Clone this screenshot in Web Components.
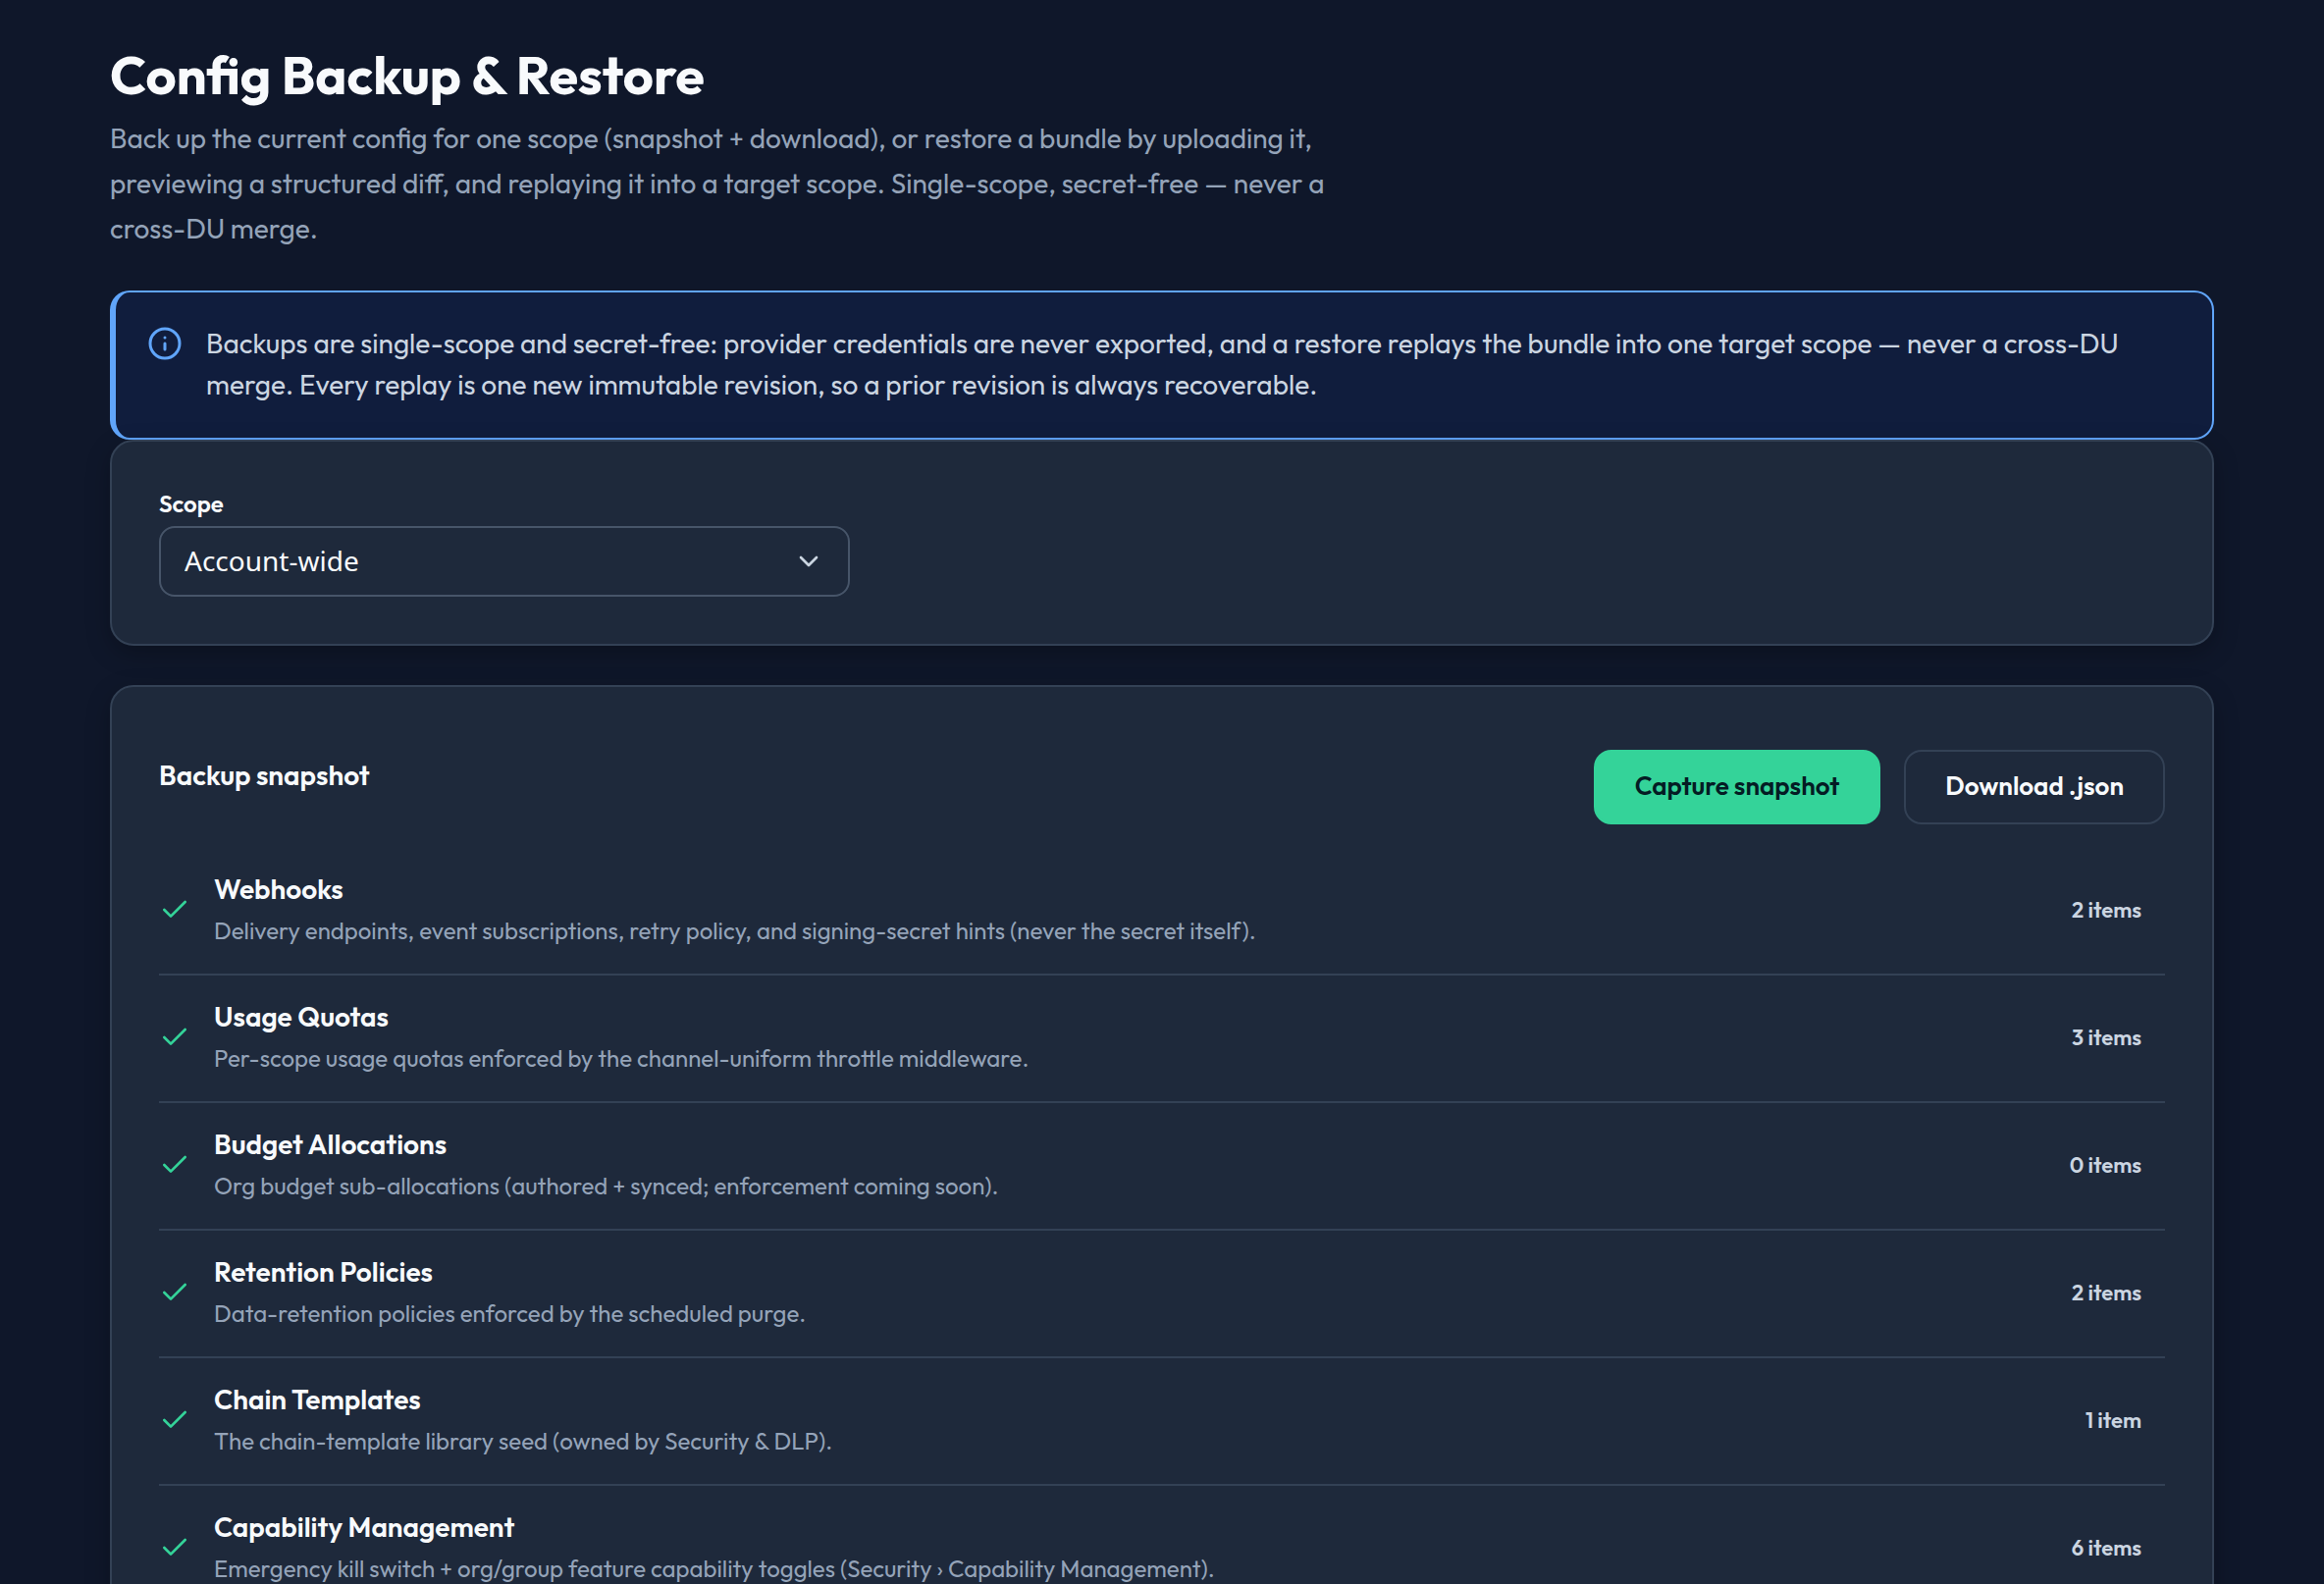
<!DOCTYPE html>
<html lang="en">
<head>
<meta charset="utf-8">
<meta name="viewport" content="width=device-width, initial-scale=1">
<title>Config Backup &amp; Restore</title>
<style>
  :root {
    --page: #0f172a;
    --surface: #1e293b;
    --line: #334155;
    --line-strong: #475569;
    --text: #f8fafc;
    --text-soft: #cbd5e1;
    --text-muted: #94a3b8;
    --info: #60a5fa;
    --info-surface: #101d3d;
    --accent: #34d399;
    --on-accent: #041c24;
  }
  body {
    margin: 0;
    background: var(--page);
    color: var(--text);
    font: 400 28px/42px Outfit, Lato, sans-serif;
    height: 100vh;
    overflow: hidden;
  }
</style>
</head>
<body>
<backup-page></backup-page>

<script>
  const define = (name, markup) => {
    const template = document.createElement('template');
    template.innerHTML = markup;
    customElements.define(name, class extends HTMLElement {
      constructor() {
        super();
        this.attachShadow({ mode: 'open' }).append(template.content.cloneNode(true));
      }
    });
  };

  define('page-heading', `
    <style>
      :host { display: flex; flex-direction: column; gap: 12px; margin-bottom: 40px; }
      h1 { margin: 0; font-size: 54px; line-height: 60px; font-weight: 700; }
      p { margin: 0; max-width: 1280px; line-height: 46px; color: var(--text-muted); }
    </style>
    <h1><slot name="title"></slot></h1>
    <p><slot></slot></p>`);

  define('info-banner', `
    <style>
      :host {
        display: flex; gap: 24px; padding: 31px 32px 33px;
        border: 2px solid var(--info); border-left-width: 6px; border-radius: 20px;
        background: var(--info-surface); color: var(--text-soft);
      }
      svg { flex: none; width: 36px; height: 36px; margin-top: 3px; color: var(--info); }
    </style>
    <svg viewBox="0 0 24 24" fill="none" stroke="currentColor" stroke-width="2" stroke-linecap="round" stroke-linejoin="round" aria-hidden="true">
      <circle cx="12" cy="12" r="10"/><path d="M12 16v-4"/><path d="M12 8h.01"/>
    </svg>
    <div role="note"><slot></slot></div>`);

  define('surface-card', `
    <style>
      :host {
        display: block; padding: 48px;
        border: 2px solid var(--line); border-radius: 24px;
        background: var(--surface);
        box-shadow: 0 8px 24px rgba(0, 0, 0, .25);
      }
    </style>
    <slot></slot>`);

  define('scope-field', `
    <style>
      :host { display: flex; flex-direction: column; gap: 8px; max-width: 704px; }
      label { font-size: 24px; line-height: 30px; font-weight: 600; }
      .control { display: grid; align-items: center; }
      .control > * { grid-area: 1 / 1; }
      select {
        appearance: none; box-sizing: border-box; width: 100%; height: 72px; margin: 0;
        padding: 0 72px 2px 24px;
        border: 2px solid var(--line-strong); border-radius: 16px;
        background: var(--surface); color: var(--text);
        font: 400 28px/42px "Noto Sans", sans-serif;
      }
      svg { justify-self: end; width: 32px; height: 32px; margin-right: 26px; color: var(--text-soft); pointer-events: none; }
    </style>
    <label for="scope">Scope</label>
    <div class="control">
      <select id="scope"><option>Account-wide</option></select>
      <svg viewBox="0 0 24 24" fill="none" stroke="currentColor" stroke-width="2" stroke-linecap="round" stroke-linejoin="round" aria-hidden="true"><path d="m6 9 6 6 6-6"/></svg>
    </div>`);

  define('action-button', `
    <style>
      :host { display: block; }
      button {
        display: block; height: 76px; margin: 0; padding: 0 40px 2px;
        border: 2px solid var(--line); border-radius: 18px;
        background: transparent; color: var(--text);
        font: 600 26px/40px Outfit, Lato, sans-serif; cursor: pointer;
      }
      :host([primary]) button { background: var(--accent); border-color: var(--accent); color: var(--on-accent); }
    </style>
    <button type="button"><slot></slot></button>`);

  define('snapshot-header', `
    <style>
      :host { display: flex; justify-content: space-between; align-items: flex-start; gap: 24px; padding: 16px 0 24px; }
      h2 { margin: 0; font-size: 28px; line-height: 52px; font-weight: 600; }
      .actions { display: flex; gap: 24px; }
    </style>
    <h2><slot></slot></h2>
    <div class="actions"><slot name="actions"></slot></div>`);

  define('domain-row', `
    <style>
      :host {
        display: flex; align-items: center; gap: 24px;
        padding: 24px 24px 26px 0; border-bottom: 2px solid var(--line);
      }
      svg { flex: none; width: 32px; height: 32px; color: var(--accent); }
      .body { flex: 1; display: flex; flex-direction: column; gap: 6px; min-width: 0; line-height: 36px; }
      .name { font-weight: 600; }
      .about { font-size: 24px; color: var(--text-muted); }
      .count { font-size: 22px; line-height: 32px; font-weight: 600; color: var(--text-soft); white-space: nowrap; }
    </style>
    <svg viewBox="0 0 24 24" fill="none" stroke="currentColor" stroke-width="2" stroke-linecap="round" stroke-linejoin="round" aria-hidden="true"><path d="M20 6 9 17l-5-5"/></svg>
    <div class="body"><span class="name"><slot name="name"></slot></span><span class="about"><slot></slot></span></div>
    <span class="count"><slot name="count"></slot></span>`);

  const domains = [
    ['Webhooks', 'Delivery endpoints, event subscriptions, retry policy, and signing-secret hints (never the secret itself).', '2 items'],
    ['Usage Quotas', 'Per-scope usage quotas enforced by the channel-uniform throttle middleware.', '3 items'],
    ['Budget Allocations', 'Org budget sub-allocations (authored + synced; enforcement coming soon).', '0 items'],
    ['Retention Policies', 'Data-retention policies enforced by the scheduled purge.', '2 items'],
    ['Chain Templates', 'The chain-template library seed (owned by Security &amp; DLP).', '1 item'],
    ['Capability Management', 'Emergency kill switch + org/group feature capability toggles (Security › Capability Management).', '6 items']
  ];

  define('domain-list', `
    <style>:host { display: block; }</style>
    ${domains.map(([name, about, count]) => `<domain-row role="listitem"><span slot="name">${name}</span>${about}<span slot="count">${count}</span></domain-row>`).join('')}`);

  define('backup-page', `
    <style>
      :host { display: block; padding: 46px 112px; }
      main { display: flex; flex-direction: column; }
      .snapshot { margin-top: 40px; }
    </style>
    <main>
      <page-heading>
        <span slot="title">Config Backup &amp; Restore</span>
        Back up the current config for one scope (snapshot + download), or restore a bundle by uploading it, previewing a structured diff, and replaying it into a target scope. Single-scope, secret-free — never a cross-DU merge.
      </page-heading>
      <info-banner>Backups are single-scope and secret-free: provider credentials are never exported, and a restore replays the bundle into one target scope — never a cross-DU merge. Every replay is one new immutable revision, so a prior revision is always recoverable.</info-banner>
      <surface-card><scope-field></scope-field></surface-card>
      <surface-card class="snapshot">
        <snapshot-header>
          Backup snapshot
          <action-button slot="actions" primary>Capture snapshot</action-button>
          <action-button slot="actions">Download .json</action-button>
        </snapshot-header>
        <domain-list role="list"></domain-list>
      </surface-card>
    </main>`);
</script>
</body>
</html>
